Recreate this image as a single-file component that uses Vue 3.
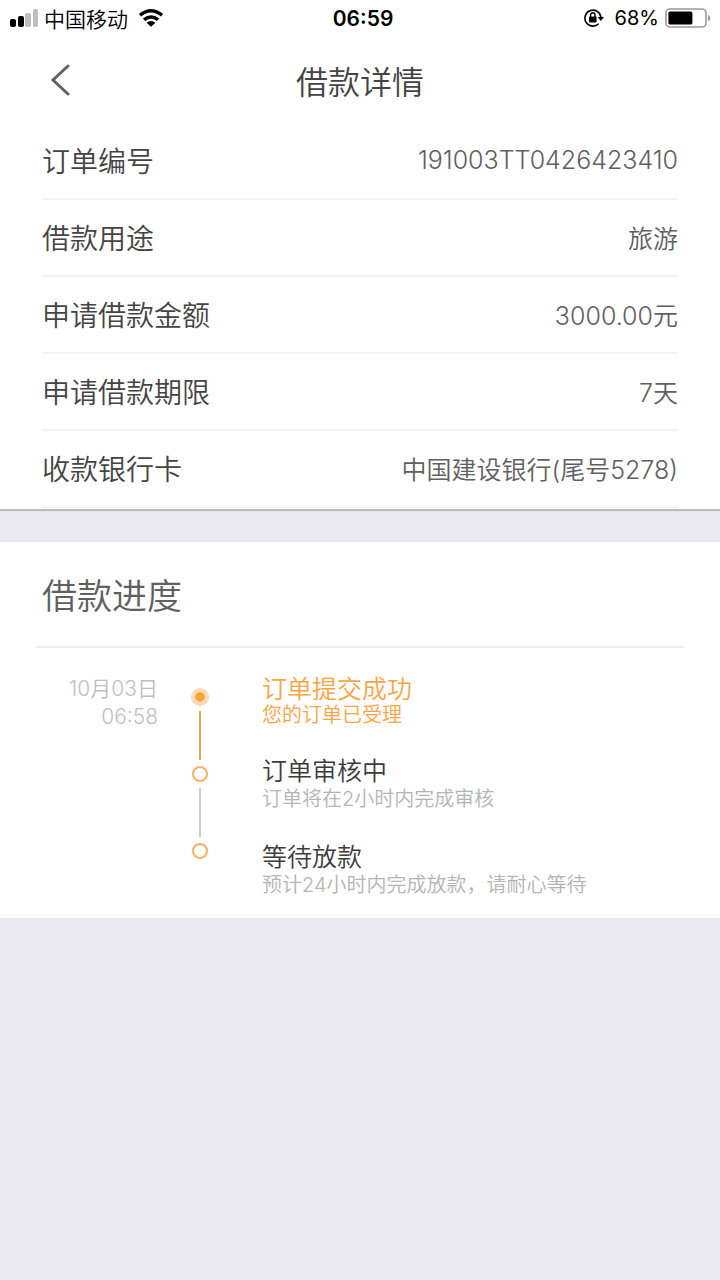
<template>
  <div class="page">

    <!-- 状态栏 -->
    <div class="status-bar">
      <div class="status-left">
        <svg class="icon-signal" viewBox="0 0 28 18" aria-hidden="true">
          <rect x="0" y="10" width="6" height="8" rx="2" fill="#000" />
          <rect x="8" y="7" width="6" height="11" rx="2" fill="#000" />
          <rect x="15" y="4" width="6" height="14" rx="2" fill="#bfbfbf" />
          <rect x="23" y="0" width="5" height="18" rx="2" fill="#bfbfbf" />
        </svg>
        <span class="carrier">中国移动</span>
        <svg class="icon-wifi" viewBox="0 0 24 18" aria-hidden="true">
          <g fill="none" stroke="#000" stroke-width="3.4">
            <path d="M1 6.2 Q12 -2.6 23 6.2" />
            <path d="M5 10.8 Q12 5 19 10.8" />
          </g>
          <path d="M7.6 13.8 Q12 10.4 16.4 13.8 L12 17.8 Z" fill="#000" />
        </svg>
      </div>
      <div class="status-time">06:59</div>
      <div class="status-right">
        <svg class="icon-lock" viewBox="0 0 20 18" aria-hidden="true">
          <path d="M14.6 14.8 A8 8 0 1 1 16.9 8.4" fill="none" stroke="#000" stroke-width="1.6" />
          <path d="M13.6 8 H20 L16.8 12 Z" fill="#000" />
          <rect x="5" y="7.6" width="7.6" height="5.8" rx="0.8" fill="#000" />
          <path d="M6.6 8.2 V6 A2.2 2.2 0 0 1 11 6 V8.2" fill="none" stroke="#000" stroke-width="1.4" />
        </svg>
        <span class="battery-text">68%</span>
        <svg class="icon-battery" viewBox="0 0 46 20" aria-hidden="true">
          <rect x="1" y="1" width="40" height="18" rx="4" fill="#fff" stroke="#9a9a9a" stroke-width="1.6" />
          <rect x="3.4" y="3.4" width="24" height="13.2" rx="1.6" fill="#000" />
          <path d="M43 6.8 Q45.4 7.6 45.4 10 Q45.4 12.4 43 13.2 Z" fill="#9a9a9a" />
        </svg>
      </div>
    </div>

    <!-- 导航 -->
    <header class="nav">
      <button class="back" type="button" aria-label="返回">
        <svg viewBox="0 0 20 32" aria-hidden="true">
          <path d="M18 2 L3 16 L18 30" fill="none" stroke="#606060" stroke-width="3" stroke-linecap="round" />
        </svg>
      </button>
      <h1 class="nav-title">借款详情</h1>
    </header>

    <!-- 借款信息 -->
    <dl class="info">
      <div v-for="row in rows" :key="row.label" class="info-row">
        <dt>{{ row.label }}</dt>
        <dd>{{ row.value }}</dd>
      </div>
    </dl>

    <!-- 借款进度 -->
    <section class="progress">
      <h2 class="progress-title">借款进度</h2>
      <div class="progress-body">
        <div class="time">
          <div>10月03日</div>
          <div>06:58</div>
        </div>
        <div class="rail">
          <template v-for="(step, i) in steps" :key="step.title">
            <span v-if="i > 0" class="rail-line" :class="{ done: steps[i - 1].active }"></span>
            <span class="dot" :class="{ active: step.active }"></span>
          </template>
        </div>
        <ol class="steps">
          <li v-for="step in steps" :key="step.title" class="step" :class="{ active: step.active }">
            <div class="step-title">{{ step.title }}</div>
            <div class="step-desc">{{ step.desc }}</div>
          </li>
        </ol>
      </div>
    </section>

  </div>
</template>


<script setup>
import { ref } from 'vue'

const rows = ref([
  { label: '订单编号', value: '191003TT0426423410' },
  { label: '借款用途', value: '旅游' },
  { label: '申请借款金额', value: '3000.00元' },
  { label: '申请借款期限', value: '7天' },
  { label: '收款银行卡', value: '中国建设银行(尾号5278)' },
])

const steps = ref([
  { title: '订单提交成功', desc: '您的订单已受理', active: true },
  { title: '订单审核中', desc: '订单将在2小时内完成审核', active: false },
  { title: '等待放款', desc: '预计24小时内完成放款，请耐心等待', active: false },
])
</script>


<style>
body {
  margin: 0;
  background: #e9e8ee;
}
</style>

<style scoped>
.page {
  min-height: 100vh;
  background: #e9e8ee;
  color: #444;
  font-family: Inter, "Noto Sans CJK SC", sans-serif;
  font-weight: 350;
}

/* 状态栏 */
.status-bar {
  display: grid;
  grid-template-columns: 1fr auto 1fr;
  align-items: center;
  height: 36px;
  padding: 0 9px 0 10px;
  background: #fefefe;
  color: #000;
  font-size: 21px;
}
.status-left,
.status-right {
  display: flex;
  align-items: center;
}
.status-right { justify-content: flex-end; }
.status-time {
  padding-left: 5px;
  font-weight: 600;
}
.icon-signal { width: 28px; height: 18px; }
.carrier { margin: 0 11px 0 6px; }
.icon-wifi { width: 24px; height: 18px; }
.icon-lock { width: 20px; height: 18px; }
.battery-text {
  margin: 0 6px 0 11px;
  font-size: 20px;
  font-weight: 400;
}
.icon-battery { width: 46px; height: 20px; }

/* 导航 */
.nav {
  display: grid;
  grid-template-columns: 78px 1fr 78px;
  align-items: center;
  height: 87px;
  background: #fefefe;
}
.back {
  display: flex;
  justify-content: flex-end;
  padding: 8px;
  border: none;
  background: none;
  cursor: pointer;
}
.back svg { width: 20px; height: 32px; }
.nav-title {
  margin: 0;
  text-align: center;
  font-size: 32px;
  font-weight: 350;
}

/* 借款信息 */
.info {
  margin: 0;
  padding: 0 42px 1px;
  border-bottom: 2px solid #bcbbc1;
  background: #fefefe;
}
.info-row {
  display: flex;
  align-items: center;
  justify-content: space-between;
  height: 73px;
  padding-bottom: 2px;
  border-bottom: 2px solid #f4f4f4;
}
.info-row dt { font-size: 28px; }
.info-row dd {
  margin: 0;
  font-size: 25px;
  color: #606060;
}

/* 借款进度 */
.progress {
  margin-top: 31px;
  padding: 0 36px 19px;
  background: #fefefe;
}
.progress-title {
  margin: 0;
  padding: 4px 6px 0;
  border-bottom: 2px solid #efefef;
  font-size: 35px;
  line-height: 100px;
  font-weight: 350;
  color: #606060;
}
.progress-body {
  display: flex;
  align-items: flex-start;
  padding-top: 27px;
}
.time {
  width: 122px;
  text-align: right;
  font-size: 21px;
  line-height: 28px;
  color: #bfbfbf;
}

.rail {
  display: flex;
  flex-direction: column;
  align-items: center;
  gap: 6px;
  width: 84px;
  padding-top: 14px;
}
.dot {
  box-sizing: border-box;
  width: 16px;
  height: 16px;
  border: 2px solid #f7b160;
  border-radius: 50%;
}
.dot.active {
  border: 3px solid #fdd9b0;
  background: #fba53c;
  background-clip: padding-box;
  outline: 1px solid #fdd9b0;
}
.rail-line {
  width: 2px;
  height: 49px;
  background: #ccc;
}
.rail-line.done { background: #f0a850; }

.steps {
  flex: 1;
  margin: 0;
  padding: 0 0 0 20px;
  list-style: none;
}
.step { padding-bottom: 30px; }
.step:last-child { padding-bottom: 0; }
.step-title {
  font-size: 25px;
  line-height: 28px;
  color: #3c3c3c;
}
.step-desc {
  font-size: 20px;
  line-height: 28px;
  color: #b4b4b4;
}
.step.active .step-title,
.step.active .step-desc { color: #f9a541; }
.step.active .step-desc { line-height: 24px; }
</style>
